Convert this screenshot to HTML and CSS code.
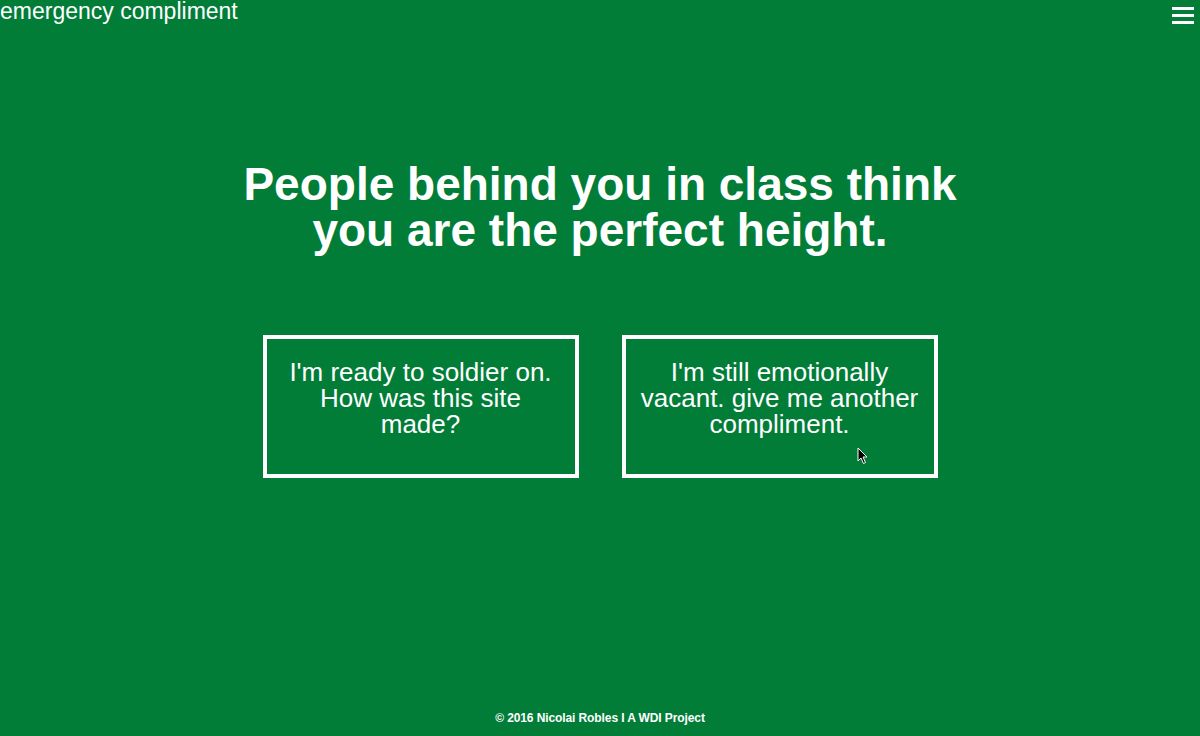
FILE: index.html
```html
<!DOCTYPE html>
<html>
<head>
<meta charset="utf-8">
<link rel="stylesheet" href="styles.css">
</head>
<body>
<header class="top">
  <div class="brand">emergency compliment</div>
  <button class="menu" aria-label="menu">
    <span></span><span></span><span></span>
  </button>
</header>
<main class="main">
  <h1 class="compliment">People behind you in class think<br>you are the perfect height.</h1>
  <div class="choices">
    <a class="choice">I'm ready to soldier on. How was this site made?</a>
    <a class="choice choice-cursor">I'm still emotionally vacant. give me another compliment.
      <svg class="cursor" width="12" height="18" viewBox="0 0 12 18"><path d="M1 1 L1 14 L4 11 L6.5 16.5 L8.5 15.5 L6 10 L10 10 Z" fill="#000" stroke="#fff" stroke-width="1"/></svg>
    </a>
  </div>
</main>
<footer class="foot">© 2016 Nicolai Robles I A WDI Project</footer>
</body>
</html>
```
FILE: styles.css
```css
html, body {
  margin: 0;
  padding: 0;
  height: 100%;
}
body {
  background: #017d38;
  color: #fff;
  font-family: "Liberation Sans", Arial, sans-serif;
  display: flex;
  flex-direction: column;
  height: 736px;
  overflow: hidden;
}
.top {
  display: flex;
  justify-content: space-between;
  align-items: flex-start;
  height: 40px;
}
.brand {
  font-size: 23px;
  line-height: 22px;
}
.menu {
  background: none;
  border: none;
  padding: 0;
  margin: 7px 6px 0 0;
  width: 22px;
  display: flex;
  flex-direction: column;
  gap: 4px;
}
.menu span {
  display: block;
  height: 3px;
  background: #fff;
  width: 22px;
}
.main {
  flex: 1;
  display: flex;
  flex-direction: column;
  align-items: center;
}
.compliment {
  margin: 121px 0 0;
  font-size: 46px;
  line-height: 46px;
  font-weight: bold;
  text-align: center;
}
.choices {
  display: flex;
  gap: 43px;
  margin-top: 82px;
}
.choice {
  position: relative;
  box-sizing: border-box;
  width: 316px;
  height: 143px;
  border: 4px solid #fff;
  padding: 20px 12px 0;
  font-size: 26px;
  line-height: 26px;
  text-align: center;
  cursor: pointer;
}
.cursor {
  position: absolute;
  left: 231px;
  top: 108px;
}
.foot {
  text-align: center;
  font-size: 12px;
  font-weight: bold;
  letter-spacing: -0.1px;
  padding-bottom: 11px;
}
```
